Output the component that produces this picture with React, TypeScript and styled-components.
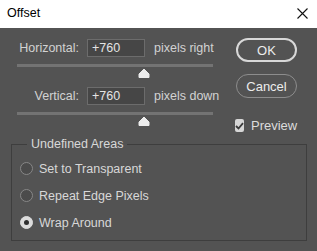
import styled, { createGlobalStyle } from "styled-components";

const GlobalStyle = createGlobalStyle`
	html, body {
		margin: 0;
		padding: 0;
		background: #535353;
	}
	* {
		box-sizing: border-box;
	}
`;

const FONT = `"Liberation Sans", Arial, sans-serif`;

const fields = [
	{ label: "Horizontal:", value: "+760", unit: "pixels right", thumb: 120 },
	{ label: "Vertical:", value: "+760", unit: "pixels down", thumb: 120 },
];

const areas = [
	{ label: "Set to Transparent", checked: false },
	{ label: "Repeat Edge Pixels", checked: false },
	{ label: "Wrap Around", checked: true },
];

const CloseIcon = () => (
	<svg width='11' height='11' viewBox='0 0 11 11'>
		<path d='M0.5 0.5 L10.5 10.5 M10.5 0.5 L0.5 10.5' stroke='#111' strokeWidth='1.1' fill='none' />
	</svg>
);

const SliderThumb = () => (
	<svg width='12' height='10' viewBox='0 0 12 10'>
		<path
			d='M6 1 L11 6 V9.5 H1 V6 Z'
			fill='#ececec'
			stroke='#ececec'
			strokeWidth='1'
			strokeLinejoin='round'
		/>
	</svg>
);

const CheckMark = () => (
	<svg width='9' height='8' viewBox='0 0 9 8'>
		<path d='M1 4 L3.5 6.5 L8 1.2' stroke='#3a3a3a' strokeWidth='1.8' fill='none' />
	</svg>
);

const App: React.FC = () => {
	return (
		<Dialog>
			<GlobalStyle />
			<TitleBar>
				<Title>Offset</Title>
				<CloseButton>
					<CloseIcon />
				</CloseButton>
			</TitleBar>
			<Body>
				<Top>
					<Fields>
						{fields.map((f) => (
							<FieldBlock key={f.label}>
								<FieldRow>
									<Label>{f.label}</Label>
									<NumberInput>{f.value}</NumberInput>
									<Unit>{f.unit}</Unit>
								</FieldRow>
								<Track />
								<ThumbRow $offset={f.thumb}>
									<SliderThumb />
								</ThumbRow>
							</FieldBlock>
						))}
					</Fields>
					<Actions>
						<Button $primary>OK</Button>
						<Button>Cancel</Button>
						<CheckRow>
							<CheckBox>
								<CheckMark />
							</CheckBox>
							<CheckLabel>Preview</CheckLabel>
						</CheckRow>
					</Actions>
				</Top>
				<Group>
					<Legend>Undefined Areas</Legend>
					{areas.map((a) => (
						<RadioRow key={a.label}>
							<Radio $checked={a.checked} />
							<RadioLabel>{a.label}</RadioLabel>
						</RadioRow>
					))}
				</Group>
			</Body>
		</Dialog>
	);
};
export default App;

const Dialog = styled.div`
	width: 317px;
	height: 251px;
	display: flex;
	flex-direction: column;
	font-family: ${FONT};
	background: #535353;
	overflow: hidden;
`;

const TitleBar = styled.div`
	height: 28px;
	flex-shrink: 0;
	background: #ffffff;
	display: flex;
	align-items: center;
	justify-content: space-between;
	padding: 0 9px 2px 7px;
`;

const Title = styled.div`
	font-size: 12.5px;
	color: #000;
`;

const CloseButton = styled.div`
	display: flex;
	align-items: center;
	margin-top: 1px;
`;

const Body = styled.div`
	flex: 1;
	display: flex;
	flex-direction: column;
	padding: 10px 10px 10px 11px;
`;

const Top = styled.div`
	display: flex;
	flex-direction: row;
	height: 97px;
`;

const Fields = styled.div`
	width: 202px;
	margin-left: 7px;
	padding-top: 1px;
	display: flex;
	flex-direction: column;
	gap: 9px;
`;

const FieldBlock = styled.div`
	display: flex;
	flex-direction: column;
`;

const FieldRow = styled.div`
	display: grid;
	grid-template-columns: 62px 58px auto;
	column-gap: 0;
	align-items: center;
	height: 18px;
`;

const Label = styled.div`
	font-size: 12.5px;
	color: #d2d2d2;
	text-align: right;
	padding-right: 1px;
`;

const NumberInput = styled.div`
	margin-left: 7px;
	width: 58px;
	height: 18px;
	background: #464646;
	border: 1px solid #6c6c6c;
	font-size: 12.5px;
	color: #e4e4e4;
	padding-left: 4px;
	line-height: 16px;
`;

const Unit = styled.div`
	font-size: 12.5px;
	color: #d2d2d2;
	margin-left: 16px;
	white-space: nowrap;
`;

const Track = styled.div`
	margin-top: 7px;
	margin-left: -1px;
	width: 196px;
	height: 3px;
	background: #737373;
`;

const ThumbRow = styled.div<{ $offset: number }>`
	display: flex;
	height: 10px;
	margin-top: 1px;
	padding-left: ${(p) => p.$offset}px;
	svg {
		display: block;
	}
`;

const Actions = styled.div`
	margin-left: 16px;
	width: 61px;
	display: flex;
	flex-direction: column;
	gap: 12px;
`;

const Button = styled.div<{ $primary?: boolean }>`
	height: 24px;
	border-radius: 12px;
	border: ${(p) => (p.$primary ? "2px solid #d8d8d8" : "1px solid #8d8d8d")};
	color: #ececec;
	font-size: 13px;
	display: flex;
	align-items: center;
	justify-content: center;
`;

const CheckRow = styled.div`
	display: flex;
	align-items: center;
	margin-top: 8px;
	margin-left: -1px;
`;

const CheckBox = styled.div`
	width: 13px;
	height: 13px;
	border-radius: 2px;
	background: #d6d6d6;
	display: flex;
	align-items: center;
	justify-content: center;
`;

const CheckLabel = styled.div`
	margin-left: 7px;
	font-size: 13px;
	color: #dcdcdc;
`;

const Group = styled.fieldset`
	margin: 2px 0 0 0;
	flex: 1;
	border: 1px solid #3e3e3e;
	padding: 4px 0 0 8px;
	min-width: 0;
	display: flex;
	flex-direction: column;
`;

const Legend = styled.legend`
	font-size: 12.5px;
	color: #d8d8d8;
	padding: 0 4px;
	margin-left: 7px;
`;

const RadioRow = styled.div`
	display: flex;
	align-items: center;
	height: 27px;
`;

const Radio = styled.div<{ $checked: boolean }>`
	width: 13px;
	height: 13px;
	border-radius: 50%;
	border: 1px solid ${(p) => (p.$checked ? "#dcdcdc" : "#878787")};
	background: ${(p) => (p.$checked ? "#dcdcdc" : "#4b4b4b")};
	display: flex;
	align-items: center;
	justify-content: center;
	&::after {
		content: "";
		width: 5px;
		height: 5px;
		border-radius: 50%;
		background: ${(p) => (p.$checked ? "#2e2e2e" : "transparent")};
	}
`;

const RadioLabel = styled.div`
	margin-left: 6px;
	font-size: 12.5px;
	color: #d8d8d8;
`;
